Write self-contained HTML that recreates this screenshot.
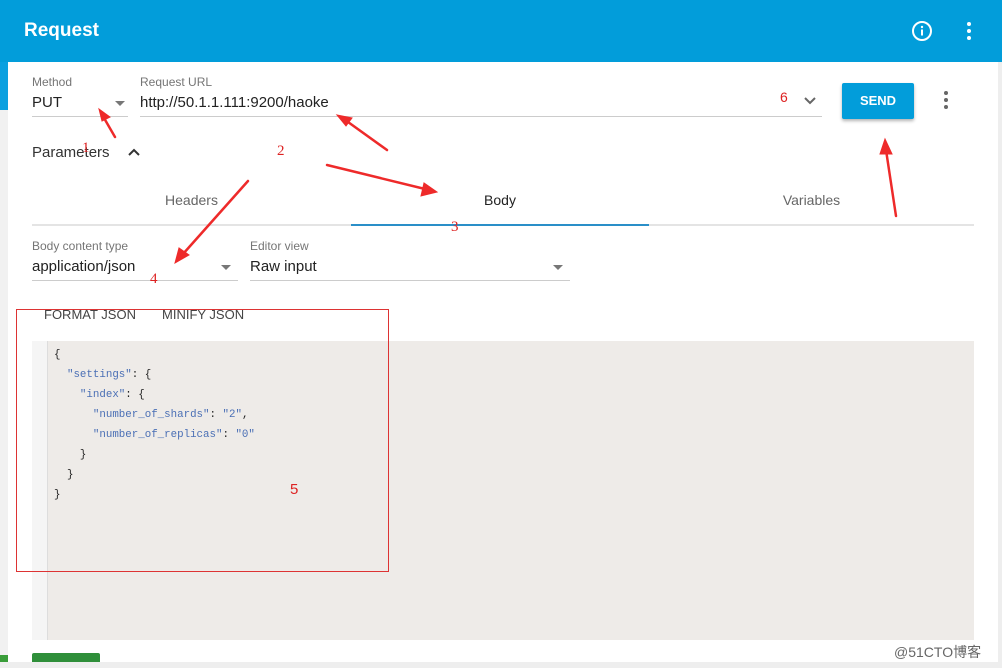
<!DOCTYPE html>
<html><head><meta charset="utf-8"><style>
*{margin:0;padding:0;box-sizing:border-box}
body{width:1002px;height:668px;overflow:hidden;background:#f1f1f1;font-family:"Liberation Sans","Noto Sans CJK SC",sans-serif;position:relative}
.abs{position:absolute}
.hdr{left:0;top:0;width:1002px;height:62px;background:#029dda}
.main{left:8px;top:62px;width:990px;height:600px;background:#fff}
.lbl{font-size:12px;color:#757575}
.val{font-size:15px;color:#222}
.line{height:1px;background:#ccc}
.tri{width:0;height:0;border-left:5px solid transparent;border-right:5px solid transparent;border-top:5px solid #777}
.tab{font-size:14px;color:#666;text-align:center}
.red{color:#d22;font-family:"Liberation Serif",serif;font-size:15px}
.code{font-family:"Liberation Mono",monospace;font-size:10.8px;color:#222;white-space:pre;line-height:20px}
.s{color:#4a6fb5}
</style></head><body>
<div class="abs hdr"></div>
<div class="abs" style="left:24px;top:20px;font-size:19px;color:#fff;font-weight:bold">Request</div>
<svg class="abs" style="left:910px;top:19px" width="24" height="24" viewBox="0 0 24 24"><circle cx="12" cy="12" r="9" fill="none" stroke="#fff" stroke-width="2"/><rect x="11" y="10.5" width="2" height="6" fill="#fff"/><circle cx="12" cy="8" r="1.2" fill="#fff"/></svg>
<svg class="abs" style="left:964px;top:20px" width="10" height="22"><circle cx="5" cy="4" r="2" fill="#fff"/><circle cx="5" cy="11" r="2" fill="#fff"/><circle cx="5" cy="18" r="2" fill="#fff"/></svg>
<div class="abs" style="left:0;top:62px;width:8px;height:48px;background:#0aa0e0"></div>
<div class="abs" style="left:0;top:655px;width:8px;height:13px;background:#3a9d3a"></div>
<div class="abs main"></div>
<div class="abs" style="left:998px;top:62px;width:4px;height:600px;background:#eee"></div>

<div class="abs lbl" style="left:32px;top:75px">Method</div>
<div class="abs val" style="left:32px;top:94px">PUT</div>
<div class="abs tri" style="left:115px;top:101px"></div>
<div class="abs line" style="left:32px;top:116px;width:96px"></div>
<div class="abs lbl" style="left:140px;top:75px">Request URL</div>
<div class="abs val" style="left:140px;top:94px">http://50.1.1.111:9200/haoke</div>
<div class="abs line" style="left:140px;top:116px;width:682px"></div>
<svg class="abs" style="left:803px;top:96px" width="14" height="10"><path d="M2 2l5 5 5-5" fill="none" stroke="#666" stroke-width="2"/></svg>
<div class="abs red" style="left:780px;top:89px;font-family:'Liberation Sans',sans-serif;font-size:14px">6</div>
<div class="abs" style="left:842px;top:83px;width:72px;height:36px;background:#029dda;border-radius:2px;box-shadow:0 2px 3px rgba(0,0,0,.3);color:#fff;font-size:13px;font-weight:bold;text-align:center;line-height:36px">SEND</div>
<svg class="abs" style="left:942px;top:90px" width="8" height="20"><circle cx="4" cy="3" r="2" fill="#666"/><circle cx="4" cy="10" r="2" fill="#666"/><circle cx="4" cy="17" r="2" fill="#666"/></svg>

<div class="abs" style="left:32px;top:144px;font-size:15px;color:#333">Parameters</div>
<svg class="abs" style="left:127px;top:147px" width="14" height="10"><path d="M2 8l5-5 5 5" fill="none" stroke="#333" stroke-width="2"/></svg>

<div class="abs tab" style="left:32px;top:192px;width:319px">Headers</div>
<div class="abs tab" style="left:351px;top:192px;width:298px;color:#222">Body</div>
<div class="abs tab" style="left:649px;top:192px;width:325px">Variables</div>
<div class="abs" style="left:32px;top:224px;width:942px;height:2px;background:#e4e4e4"></div>
<div class="abs" style="left:351px;top:224px;width:298px;height:2px;background:#2a8fc8"></div>

<div class="abs lbl" style="left:32px;top:239px">Body content type</div>
<div class="abs val" style="left:32px;top:258px">application/json</div>
<div class="abs tri" style="left:221px;top:265px"></div>
<div class="abs line" style="left:32px;top:280px;width:206px"></div>
<div class="abs lbl" style="left:250px;top:239px">Editor view</div>
<div class="abs val" style="left:250px;top:258px">Raw input</div>
<div class="abs tri" style="left:553px;top:265px"></div>
<div class="abs line" style="left:250px;top:280px;width:320px"></div>

<div class="abs" style="left:44px;top:307px;font-size:13px;color:#444">FORMAT JSON</div>
<div class="abs" style="left:162px;top:307px;font-size:13px;color:#444">MINIFY JSON</div>

<div class="abs" style="left:32px;top:341px;width:942px;height:299px;background:#eeebe8"></div>
<div class="abs" style="left:32px;top:341px;width:16px;height:299px;background:#f5f5f5;border-right:1px solid #ddd"></div>
<div class="abs code" style="left:54px;top:345px">{
  <span class="s">"settings"</span>: {
    <span class="s">"index"</span>: {
      <span class="s">"number_of_shards"</span>: <span class="s">"2"</span>,
      <span class="s">"number_of_replicas"</span>: <span class="s">"0"</span>
    }
  }
}</div>

<div class="abs" style="left:16px;top:309px;width:373px;height:263px;border:1px solid #d33"></div>
<div class="abs" style="left:32px;top:653px;width:68px;height:9px;background:#2f8f3a;border-radius:2px 2px 0 0"></div>
<div class="abs" style="left:0;top:662px;width:1002px;height:6px;background:#eee"></div>
<div class="abs" style="left:894px;top:642px;font-size:14px;color:#666">@51CTO博客</div>

<div class="abs red" style="left:82px;top:140px">1</div>
<div class="abs red" style="left:277px;top:143px">2</div>
<div class="abs red" style="left:451px;top:219px">3</div>
<div class="abs red" style="left:150px;top:271px">4</div>
<div class="abs red" style="left:290px;top:481px;font-family:'Liberation Sans',sans-serif">5</div>

<svg class="abs" style="left:0;top:0" width="1002" height="668">
<g fill="#ee2a2a" stroke="#ee2a2a" stroke-width="2.5" stroke-linecap="round">
<line x1="115" y1="137" x2="104" y2="118"/><polygon points="99,109 110,117 102,121" stroke-width="1"/>
<line x1="387" y1="150" x2="348" y2="122"/><polygon points="337,115 352,118 346,126" stroke-width="1"/>
<line x1="327" y1="165" x2="425" y2="189"/><polygon points="437,192 421,196 424,183" stroke-width="1"/>
<line x1="248" y1="181" x2="183" y2="254"/><polygon points="175,263 179,248 189,255" stroke-width="1"/>
<line x1="896" y1="216" x2="886" y2="150"/><polygon points="885,139 892,154 880,154" stroke-width="1"/>
</g></svg>
</body></html>
